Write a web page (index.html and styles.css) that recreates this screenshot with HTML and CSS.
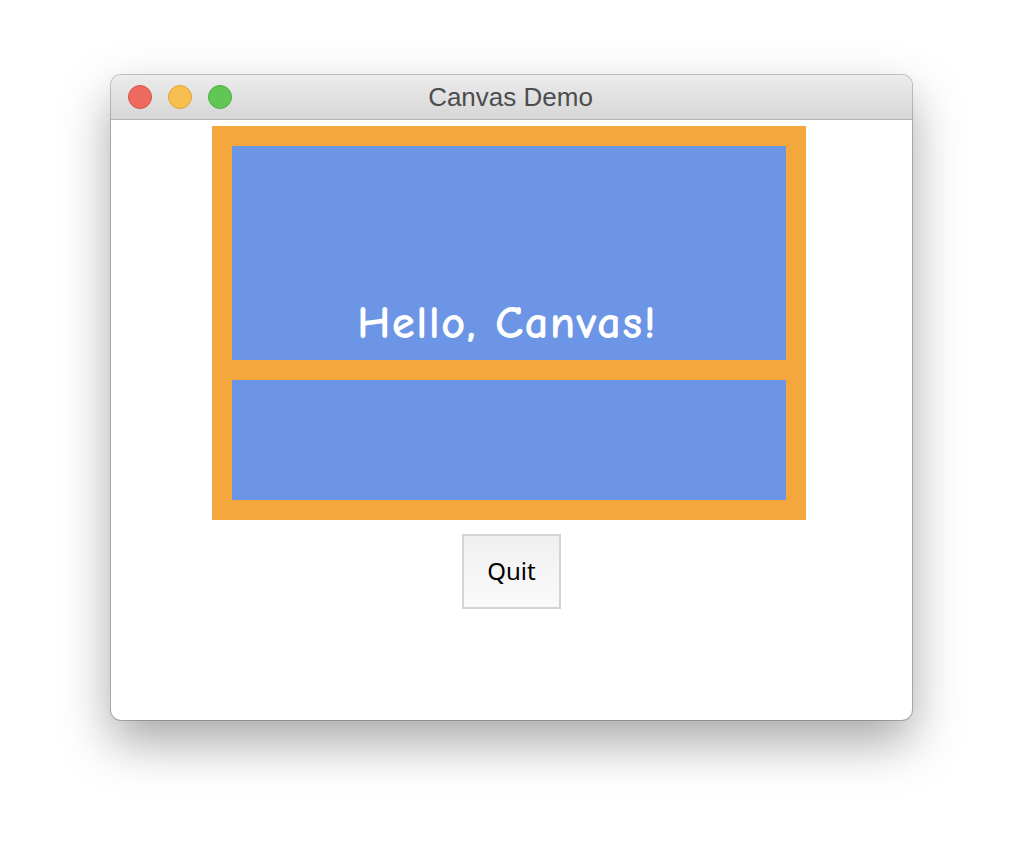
FILE: index.html
```html
<!DOCTYPE html>
<html>
<head>
<meta charset="utf-8">
<link rel="stylesheet" href="styles.css">
</head>
<body>
<div class="stage">
  <div class="window">
    <div class="titlebar">
      <div class="lights">
        <span class="light red"></span>
        <span class="light yellow"></span>
        <span class="light green"></span>
      </div>
      <div class="title">Canvas Demo</div>
    </div>
    <div class="content">
      <div class="frame">
        <div class="panel top"><span class="hello">Hello, Canvas!</span></div>
        <div class="panel bottom"></div>
      </div>
      <button class="quit">Quit</button>
    </div>
  </div>
</div>
</body>
</html>
```
FILE: styles.css
```css
html, body {
  margin: 0;
  padding: 0;
  background: #ffffff;
}
.stage {
  width: 1024px;
  height: 868px;
  padding: 75px 0 0 111px;
  box-sizing: border-box;
}
.window {
  width: 801px;
  height: 645px;
  border-radius: 10px;
  background: #ffffff;
  box-shadow: 0 0 0 1px rgba(0,0,0,0.22), 0 22px 50px rgba(0,0,0,0.35);
  overflow: hidden;
  display: flex;
  flex-direction: column;
}
.titlebar {
  height: 44px;
  flex: none;
  background: linear-gradient(#ececec, #d6d6d6);
  border-bottom: 1px solid #b2b2b2;
  display: flex;
  align-items: center;
  justify-content: center;
  position: relative;
}
.lights {
  position: absolute;
  left: 17px;
  top: 10px;
  display: flex;
  gap: 16px;
}
.light {
  width: 22px;
  height: 22px;
  border-radius: 50%;
  display: block;
}
.red { background: #ee6a5f; border: 1px solid #d5544a; }
.yellow { background: #f6be4f; border: 1px solid #dea43a; }
.green { background: #62c655; border: 1px solid #4ead43; }
.title {
  font-family: "Liberation Sans", Arial, sans-serif;
  font-size: 26px;
  color: #4d4d4d;
  margin-top: 1px;
  margin-right: 2px;
}
.content {
  flex: 1;
  display: flex;
  flex-direction: column;
  align-items: center;
  padding-top: 6px;
}
.frame {
  width: 594px;
  height: 394px;
  box-sizing: border-box;
  background: #f3a73c;
  padding: 20px;
  display: flex;
  flex-direction: column;
  gap: 20px;
  margin-right: 5px;
}
.panel {
  background: #6c95e6;
}
.panel.top {
  height: 214px;
  display: flex;
  justify-content: center;
  align-items: flex-end;
}
.panel.bottom {
  height: 120px;
}
.hello {
  font-family: "Comic Sans MS", "Comic Neue", "Noto Sans", sans-serif;
  color: #ffffff;
  font-size: 47px;
  font-weight: 700;
  line-height: 1;
  margin-bottom: 13px;
  margin-left: -4px;
  letter-spacing: 1.3px;
}
.quit {
  margin-top: 14px;
  width: 99px;
  height: 75px;
  border: 2px solid #d4d4d4;
  background: linear-gradient(#f0f0f0, #fafafa);
  font-family: "Noto Sans", "Open Sans", sans-serif;
  font-size: 24px;
  color: #000000;
  padding: 0 0 3px 0;
}
```
